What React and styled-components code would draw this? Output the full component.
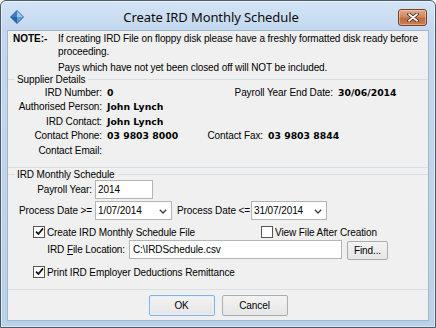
import React from 'react';
import styled, { createGlobalStyle } from 'styled-components';

const Global = createGlobalStyle`
  html, body { margin: 0; padding: 0; background: #ffffff; }
  body { font-family: "Liberation Sans", Arial, sans-serif; font-size: 10px; letter-spacing: -0.1px; color: #000; }
  * { box-sizing: border-box; }
`;

const Window = styled.div`
  width: 436px;
  height: 328px;
  border: 1px solid #4d5a69;
  border-radius: 6px 6px 0 0;
  background: linear-gradient(#d4e4f6 0px, #c3d8ef 28px, #bad1ea 100%);
  box-shadow: inset 0 0 0 1px rgba(255, 255, 255, 0.5);
  display: flex;
  flex-direction: column;
  overflow: hidden;
`;

const TitleBar = styled.div`
  height: 29px;
  display: flex;
  align-items: flex-start;
  padding: 0 8px 0 9px;
`;

const AppIcon = styled.svg`
  width: 14px;
  height: 14px;
  margin-top: 9px;
  flex: none;
`;

const TitleText = styled.div`
  flex: 1;
  text-align: center;
  margin-top: 8px;
  font-family: "Noto Sans", "Open Sans", sans-serif;
  font-size: 13px;
  line-height: 16px;
  letter-spacing: -0.1px;
  color: #0c0c0c;
`;

const CloseButton = styled.div`
  width: 29px;
  height: 17px;
  margin-top: 8px;
  border: 1px solid #74442e;
  border-radius: 3px;
  background: linear-gradient(#e3a985 0%, #d08a5f 45%, #bf6d40 55%, #c9804f 100%);
  box-shadow: inset 0 0 0 1px rgba(255, 220, 200, 0.45);
  display: flex;
  align-items: center;
  justify-content: center;
  flex: none;
`;

const Client = styled.div`
  flex: 1;
  margin: 0 6px 6px;
  border: 1px solid #a3b5c9;
  background: #f0f0f0;
  display: flex;
  flex-direction: column;
`;

const Note = styled.div`
  display: grid;
  grid-template-columns: 45px auto;
  padding: 1px 0 0 5px;
  line-height: 13px;
`;

const NoteLabel = styled.div`
  font-weight: bold;
  letter-spacing: 0;
`;

const NotePara = styled.p`
  margin: ${(p) => (p.$gap ? '3px' : '0')} 0 0;
  white-space: nowrap;
`;

const Group = styled.div`
  margin-top: ${(p) => p.$mt || 0}px;
  padding-bottom: ${(p) => p.$pb}px;
  border-bottom: 1px solid #d9dee3;
`;

const GroupTitle = styled.div`
  display: flex;
  align-items: center;
  height: 13px;
  line-height: 13px;
  white-space: nowrap;
  &::before {
    content: '';
    width: 7px;
    height: 1px;
    background: #d9dee3;
    margin-right: 2px;
  }
  &::after {
    content: '';
    flex: 1;
    height: 1px;
    background: #d9dee3;
    margin-left: 3px;
  }
`;

const InfoRows = styled.div`
  margin-top: -1px;
`;

const InfoRow = styled.div`
  display: flex;
  align-items: center;
  height: 14.5px;
  white-space: nowrap;
`;

const Label = styled.span`
  display: inline-block;
  width: ${(p) => p.$w}px;
  text-align: right;
  flex: none;
  white-space: nowrap;
`;

const Value = styled.span`
  display: inline-block;
  font-family: "DejaVu Sans", Verdana, sans-serif;
  font-weight: bold;
  font-size: 9.3px;
  letter-spacing: 0;
  margin-left: 5px;
  width: ${(p) => (p.$w ? `${p.$w}px` : 'auto')};
  flex: none;
`;

const FormRow = styled.div`
  display: flex;
  align-items: ${(p) => p.$align || 'center'};
  height: ${(p) => p.$h}px;
  margin-top: ${(p) => p.$mt}px;
  padding-left: ${(p) => p.$pl || 0}px;
  white-space: nowrap;
`;

const TextBox = styled.div`
  width: ${(p) => p.$w}px;
  height: 19px;
  margin-left: ${(p) => p.$ml}px;
  background: #fff;
  border: 1px solid #b2b4b8;
  padding-left: ${(p) => p.$pl}px;
  display: flex;
  align-items: center;
  flex: none;
`;

const Combo = styled(TextBox)`
  justify-content: space-between;
  padding-right: 4px;
`;

const Chevron = styled.svg`
  width: 8px;
  height: 5px;
  margin-top: 1px;
`;

const CheckItem = styled.label`
  display: flex;
  align-items: center;
  width: ${(p) => (p.$w ? `${p.$w}px` : 'auto')};
  gap: 2px;
  flex: none;
`;

const Box = styled.span`
  width: 12px;
  height: 12px;
  border: 1px solid #555;
  background: #fff;
  display: flex;
  align-items: center;
  justify-content: center;
  margin-top: -1px;
`;

const Button = styled.div`
  width: ${(p) => p.$w}px;
  height: ${(p) => p.$h}px;
  margin-left: ${(p) => p.$ml || 0}px;
  margin-top: ${(p) => p.$mt || 0}px;
  border: 1px solid ${(p) => (p.$default ? '#7eb4ea' : '#acacac')};
  border-radius: 2px;
  background: linear-gradient(#f3f3f3, #e6e6e6);
  box-shadow: ${(p) => (p.$default ? 'inset 0 0 0 1px #e3effb' : 'none')};
  display: flex;
  align-items: center;
  justify-content: center;
  flex: none;
`;

const ButtonPanel = styled.div`
  flex: 1;
  display: flex;
  justify-content: center;
  align-items: flex-start;
  gap: 7px;
  padding-top: 5px;
`;

const Check = () => (
  <svg width="9" height="9" viewBox="0 0 9 9">
    <path d="M1 4.6 L3.4 7 L8 1.4" fill="none" stroke="#111" strokeWidth="1.7" />
  </svg>
);

const CheckBox = ({ checked }) => <Box>{checked && <Check />}</Box>;

const Arrow = () => (
  <Chevron viewBox="0 0 8 5">
    <path d="M0.8 0.8 L4 4 L7.2 0.8" fill="none" stroke="#3c3c3c" strokeWidth="1.3" />
  </Chevron>
);

export default function App() {
  return (
    <>
      <Global />
      <Window>
        <TitleBar>
          <AppIcon viewBox="0 0 14 14">
            <polygon points="7,0.5 7,7 0.5,7" fill="#3f7fc6" />
            <polygon points="7,0.5 13.5,7 7,7" fill="#9cc7ee" />
            <polygon points="0.5,7 7,7 7,13.5" fill="#2b63a6" />
            <polygon points="7,7 13.5,7 7,13.5" fill="#5d9bdb" />
            <polygon points="7,0.5 13.5,7 7,13.5 0.5,7" fill="none" stroke="#1f4f8a" strokeWidth="0.8" />
          </AppIcon>
          <TitleText>Create IRD Monthly Schedule</TitleText>
          <CloseButton>
            <svg width="12" height="9" viewBox="0 0 12 9">
              <path d="M2 1.2 L10 7.8 M10 1.2 L2 7.8" stroke="#3b2418" strokeWidth="3.4" strokeLinecap="round" />
              <path d="M2 1.2 L10 7.8 M10 1.2 L2 7.8" stroke="#ffffff" strokeWidth="1.8" strokeLinecap="round" />
            </svg>
          </CloseButton>
        </TitleBar>
        <Client>
          <Note>
            <NoteLabel>NOTE:-</NoteLabel>
            <div>
              <NotePara>
                If creating IRD File on floppy disk please have a freshly formatted disk ready before
                <br />
                proceeding.
              </NotePara>
              <NotePara $gap>Pays which have not yet been closed off will NOT be included.</NotePara>
            </div>
          </Note>

          <Group $mt={-1} $pb={9.5}>
            <GroupTitle>Supplier Details</GroupTitle>
            <InfoRows>
              <InfoRow>
                <Label $w={94}>IRD Number:</Label>
                <Value $w={120}>0</Value>
                <Label $w={106}>Payroll Year End Date:</Label>
                <Value>30/06/2014</Value>
              </InfoRow>
              <InfoRow>
                <Label $w={94}>Authorised Person:</Label>
                <Value>John Lynch</Value>
              </InfoRow>
              <InfoRow>
                <Label $w={94}>IRD Contact:</Label>
                <Value>John Lynch</Value>
              </InfoRow>
              <InfoRow>
                <Label $w={94}>Contact Phone:</Label>
                <Value $w={80}>03 9803 8000</Value>
                <Label $w={76}>Contact Fax:</Label>
                <Value>03 9803 8844</Value>
              </InfoRow>
              <InfoRow>
                <Label $w={94}>Contact Email:</Label>
              </InfoRow>
            </InfoRows>
          </Group>

          <Group $pb={10}>
            <GroupTitle>IRD Monthly Schedule</GroupTitle>
            <FormRow $h={19} $mt={-1}>
              <Label $w={84}>Payroll Year:</Label>
              <TextBox $w={58} $ml={3} $pl={2}>2014</TextBox>
            </FormRow>
            <FormRow $h={19} $mt={2}>
              <Label $w={84}>Process Date &gt;=</Label>
              <Combo $w={77} $ml={3} $pl={2}>
                1/07/2014
                <Arrow />
              </Combo>
              <Label $w={78}>Process Date &lt;=</Label>
              <Combo $w={76} $ml={1} $pl={2}>
                31/07/2014
                <Arrow />
              </Combo>
            </FormRow>
            <FormRow $h={14} $mt={5} $pl={25}>
              <CheckItem $w={228}>
                <CheckBox checked />
                Create IRD Monthly Schedule File
              </CheckItem>
              <CheckItem>
                <CheckBox />
                View File After Creation
              </CheckItem>
            </FormRow>
            <FormRow $h={20} $mt={1} $align="flex-start">
              <Label $w={117} style={{ lineHeight: '19px' }}>
                IRD <u>F</u>ile Location:
              </Label>
              <TextBox $w={213} $ml={4} $pl={3}>C:\IRDSchedule.csv</TextBox>
              <Button $w={41} $h={19} $ml={5} $mt={1}>Find...</Button>
            </FormRow>
            <FormRow $h={14} $mt={5} $pl={25}>
              <CheckItem>
                <CheckBox checked />
                Print IRD Employer Deductions Remittance
              </CheckItem>
            </FormRow>
          </Group>

          <ButtonPanel>
            <Button $w={66} $h={21} $default>OK</Button>
            <Button $w={66} $h={21}>Cancel</Button>
          </ButtonPanel>
        </Client>
      </Window>
    </>
  );
}
